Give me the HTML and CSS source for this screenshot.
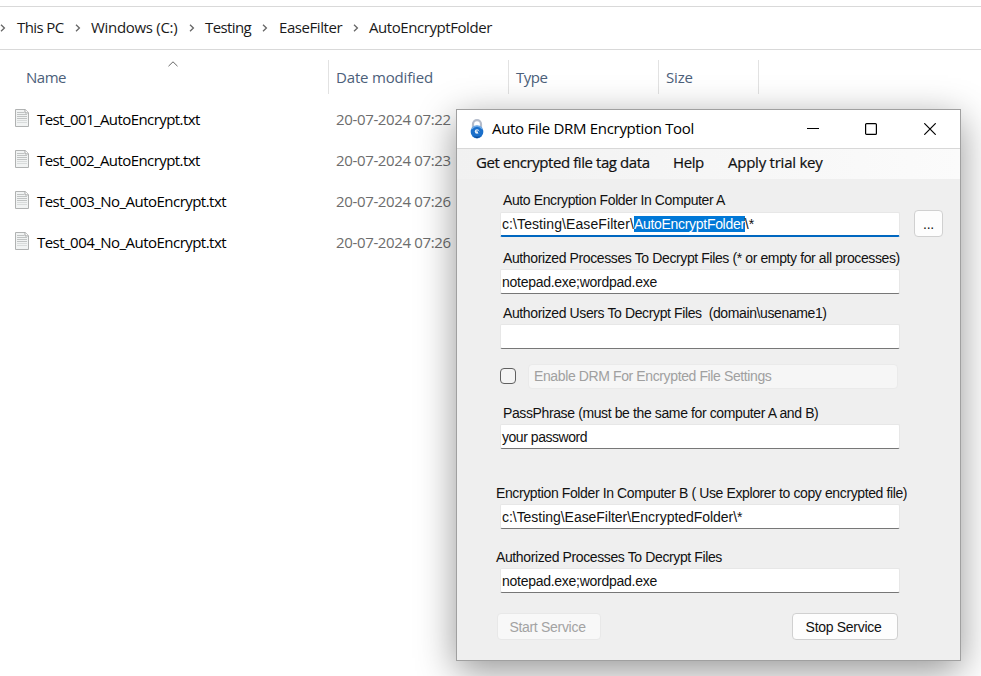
FILE: index.html
```
<!DOCTYPE html>
<html lang="en">
<head>
<meta charset="utf-8">
<title>AutoEncryptFolder</title>
<link rel="stylesheet" href="styles.css">
</head>
<body>
<svg class="defs" width="0" height="0">
  <symbol id="chev" viewBox="0 0 6 8"><path d="M1 .8 4.4 4 1 7.2" fill="none" stroke="#666" stroke-width="1.3"/></symbol>
  <symbol id="doc" viewBox="0 0 14 18">
    <path d="M.5.5h9.800l3.200 3.200v13.800H.5z" fill="#f1f3f3" stroke="#b0b2b2"/>
    <path d="M10 .5v3.400h3.500" fill="#fff" stroke="#a3a5a5"/>
    <path d="M2 3.500h7M2 5.500h10M2 7.500h10M2 9.500h10" stroke="#c0c3c3"/>
    <path d="M2 11.500h10M2 13.500h10" stroke="#d8dbdb"/>
  </symbol>
</svg>
<main class="explorer">
  <nav class="crumbs">
    <svg class="chev"><use href="#chev"/></svg><span class="c1">This PC</span>
    <svg class="chev"><use href="#chev"/></svg><span class="c2">Windows (C:)</span>
    <svg class="chev"><use href="#chev"/></svg><span class="c3">Testing</span>
    <svg class="chev"><use href="#chev"/></svg><span class="c4">EaseFilter</span>
    <svg class="chev"><use href="#chev"/></svg><span class="c5">AutoEncryptFolder</span>
  </nav>
  <header class="columns">
    <div class="col name">Name<svg class="sort" viewBox="0 0 10 6"><path d="M.5 5.200 5 .8l4.500 4.400" fill="none" stroke="#666"/></svg></div>
    <div class="col modified">Date modified</div>
    <div class="col">Type</div>
    <div class="col modified">Size</div>
  </header>
  <section class="files">
    <div class="file"><svg class="doc"><use href="#doc"/></svg><span class="fname">Test_001_AutoEncrypt.txt</span><span class="date">20-07-2024 07:22</span></div>
    <div class="file"><svg class="doc"><use href="#doc"/></svg><span class="fname">Test_002_AutoEncrypt.txt</span><span class="date">20-07-2024 07:23</span></div>
    <div class="file"><svg class="doc"><use href="#doc"/></svg><span class="fname long">Test_003_No_AutoEncrypt.txt</span><span class="date">20-07-2024 07:26</span></div>
    <div class="file"><svg class="doc"><use href="#doc"/></svg><span class="fname long">Test_004_No_AutoEncrypt.txt</span><span class="date">20-07-2024 07:26</span></div>
  </section>
</main>

<section class="window">
  <header class="titlebar">
    <svg class="lock" viewBox="0 0 14 20"><path d="M3 9V5.200a4 4 0 0 1 8 0V9" fill="none" stroke="#b4bccb" stroke-width="2.200"/><circle cx="7" cy="13" r="6.300" fill="#1a6fca"/><path d="M1.800 10a6 6 0 0 1 10.400 0" fill="none" stroke="#6da9e6" stroke-width="1.500"/><circle cx="7" cy="12.500" r="2.200" fill="#e4effa"/><path d="M6.500 12h2v2" fill="none" stroke="#1a6fca"/><path d="M3 16.500q4 2.500 8 0l-4 3z" fill="#0a4690"/></svg>
    <h1 class="title">Auto File DRM Encryption Tool</h1>
    <svg class="ctl" viewBox="0 0 12 12"><path d="M0 5.500h12" stroke="#000"/></svg>
    <svg class="ctl" viewBox="0 0 12 12"><rect x=".6" y=".6" width="10.800" height="10.800" rx="1" fill="none" stroke="#000" stroke-width="1.200"/></svg>
    <svg class="ctl" viewBox="0 0 12 12"><path d="M.3.3l11.400 11.400M11.700.3.3 11.700" stroke="#000" stroke-width="1.200"/></svg>
  </header>
  <nav class="menu"><span class="m1">Get encrypted file tag data</span><span class="m2">Help</span><span class="m3">Apply trial key</span></nav>
  <form class="form">
    <label class="label">Auto Encryption Folder In Computer A</label>
    <div class="line"><div class="field path focus">c:\Testing\EaseFilter\<mark>AutoEncryptFolder</mark>\*</div><div class="btn browse">...</div></div>
    <label class="label l2">Authorized Processes To Decrypt Files (* or empty for all processes)</label>
    <div class="field">notepad.exe;wordpad.exe</div>
    <label class="label l3">Authorized Users To Decrypt Files &nbsp;(domain\usename1)</label>
    <div class="field"></div>
    <div class="check"><i class="box"></i><div class="drm">Enable DRM For Encrypted File Settings</div></div>
    <label class="label l4">PassPhrase (must be the same for computer A and B)</label>
    <div class="field password">your password</div>
    <label class="label l5">Encryption Folder In Computer B ( Use Explorer to copy encrypted file)</label>
    <div class="field path">c:\Testing\EaseFilter\EncryptedFolder\*</div>
    <label class="label l6">Authorized Processes To Decrypt Files</label>
    <div class="field">notepad.exe;wordpad.exe</div>
    <div class="actions"><div class="btn off">Start Service</div><div class="btn">Stop Service</div></div>
  </form>
</section>
</body>
</html>
```
FILE: styles.css
```
* { box-sizing: border-box; }
body { margin: 0; width: 981px; height: 676px; overflow: hidden; position: relative; background: #fff; font: 15px/20px "Open Sans", "Noto Sans", sans-serif; color: #1a1a1a; white-space: nowrap; }
.defs { position: absolute; }
.explorer { padding-top: 6px; }
.crumbs { display: flex; align-items: center; height: 44px; border: solid #d9d9d9; border-width: 1px 0; letter-spacing: -.43px; }
.chev { width: 6px; height: 8px; flex: none; }
.crumbs span { flex: none; padding-bottom: 2px; }
.c1 { width: 47px; margin: 0 11px; letter-spacing: -.6px; }
.c2 { width: 87px; margin: 0 11px 0 10px; letter-spacing: -.3px; }
.c3 { width: 46px; margin: 0 11px 0 10px; letter-spacing: -.6px; }
.c4 { width: 63px; margin: 0 11px; }
.c5 { margin-left: 10px; }
.columns { display: grid; grid-template-columns: 329px 180px 150px 100px; height: 34px; margin-top: 10px; color: #4c607a; letter-spacing: -.5px; }
.col { position: relative; border-right: 1px solid #e2e2e2; padding: 7px 0 0 7px; }
.col.name { padding-left: 26px; }
.col.modified { letter-spacing: -.17px; }
.sort { position: absolute; left: 168px; top: 1px; width: 10px; height: 6px; }
.files { padding-top: 5px; }
.file { display: grid; grid-template-columns: 22px 299px auto; align-items: center; height: 41px; padding-left: 15px; color: #000; }
.file span { padding-bottom: 2px; }
.fname { letter-spacing: -.57px; }
.fname.long { letter-spacing: -.53px; }
.doc { width: 14px; height: 18px; margin-top: -3px; }
.date { color: #6d6d6d; letter-spacing: -.35px; }

.window { position: absolute; left: 456px; top: 109px; width: 505px; height: 552px; border: 1px solid #a0a0a0; background: #efefef; box-shadow: 0 10px 36px rgba(0,0,0,.42); }
.titlebar { display: flex; align-items: center; height: 39px; padding-left: 13px; background: #fff; border-bottom: 1px solid #d8d8d8; }
.lock { width: 14px; height: 20px; }
.title { flex: none; margin: 0 0 0 8px; padding-bottom: 2px; width: 315px; font-size: 15px; font-weight: 400; letter-spacing: -.31px; color: #000; }
.ctl { width: 12px; height: 12px; margin-right: 46px; flex: none; }
.ctl:nth-of-type(3) { margin-right: 47px; }
.ctl:last-child { margin-right: 0; }
.menu { display: flex; align-items: center; height: 30px; padding: 0 0 4px 19px; background: linear-gradient(90deg, #f1f1f1, #fbfbfb); color: #111; -webkit-text-stroke: .2px #111; letter-spacing: -.42px; }
.m1 { width: 197px; }
.m2 { width: 55px; }
.m3 { letter-spacing: -.24px; }
.form { padding: 11px 17px 0 43px; font: 14px/20px "Liberation Sans", sans-serif; color: #111; letter-spacing: -.385px; }
.label { display: block; padding-left: 3px; }
.line { display: flex; margin-top: 2px; }
.field { width: 400px; height: 25px; padding: 2px 1px; margin-top: 1px; background: #fff; border: 1px solid #e7e7e7; border-bottom: 1px solid #777; border-radius: 2px; letter-spacing: -.27px; }
.line .field { flex: none; margin-top: 0; padding-top: 1px; }
.field.path { letter-spacing: -.04px; }
.field.password { letter-spacing: -.46px; }
.focus { border-bottom: 2px solid #0067c0; }
.field.focus { letter-spacing: .09px; }
mark { background: #0078d7; color: #fff; letter-spacing: -.3px; }
.btn { display: flex; align-items: center; justify-content: center; width: 106px; height: 27px; padding-right: 3px; background: #fdfdfd; border: 1px solid #d0d0d0; border-radius: 4px; letter-spacing: -.3px; }
.browse { width: 30px; height: 27px; margin-left: 14px; margin-top: -2px; padding-right: 0; }
.l2 { margin-top: 11px; }
.l3 { margin-top: 9px; }
.check { display: flex; align-items: center; height: 26px; margin-top: 14px; }
.box { width: 16px; height: 16px; border: 1px solid #606060; border-radius: 4px; background: #f4f4f4; }
.drm { width: 370px; height: 25px; margin-left: 12px; padding: 1px 5px; border: 1px solid #eaeaea; border-radius: 4px; background: #f6f6f6; color: #a0a0a0; }
.l4 { margin-top: 14px; }
.l5 { margin-top: 34px; margin-left: -7px; }
.l6 { margin-top: 18px; margin-left: -7px; }
.actions { display: flex; justify-content: space-between; width: 401px; margin: 20px 0 0 -3px; }
.off { width: 104px; background: #f8f8f8; border-color: #e8e8e8; color: #a3a3a3; }
```
